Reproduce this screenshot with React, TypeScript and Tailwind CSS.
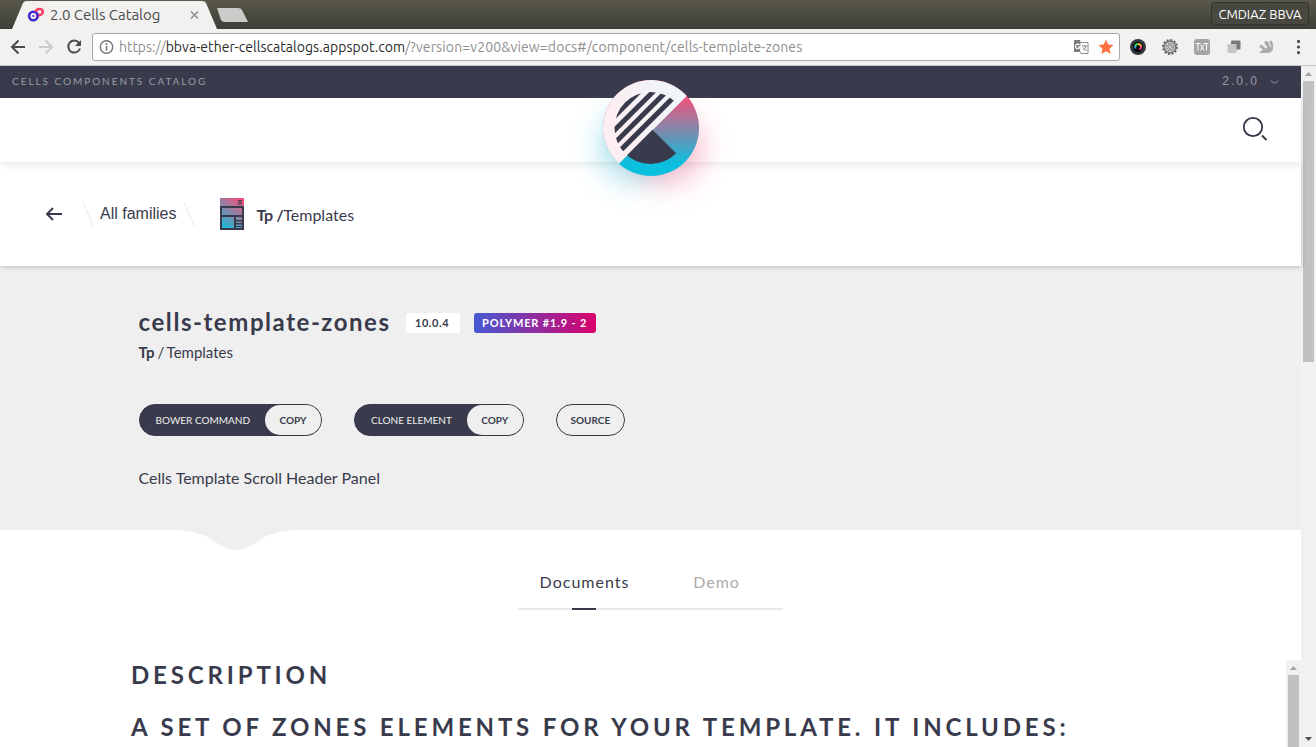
import React from "react";

function TabStrip() {
  return (
    <div className="relative flex h-[29px] shrink-0 bg-gradient-to-b from-[#59584b] to-[#3e3d37] font-['Ubuntu','Open_Sans',sans-serif]">
      <svg className="h-[29px] w-[250px] shrink-0" viewBox="0 0 250 29">
        <path d="M12 29 L23 3 Q24 1 27 1 H202 Q205 1 206 3 L217 29 Z" fill="#f2f1f0" />
        <path d="M217 8 H238 Q241 8 242 10 L248 22 H225 Q222 22 221 20 Z" fill="#cdcbc9" />
        <circle cx="33.300" cy="16" r="4.200" fill="none" stroke="#3d2cd0" strokeWidth="2.600" />
        <circle cx="33.300" cy="16" r="1.100" fill="#3d2cd0" />
        <path d="M35.500 11.500 Q37 8.800 40 9 Q43 9.400 42.800 12 Q42.500 15 38.500 15.300 L37.500 17" fill="none" stroke="#fa3c66" strokeWidth="2.500" />
        <path d="M36.500 12.500 Q38.500 15 37.500 18" fill="none" stroke="#5a2fc4" strokeWidth="2.200" />
        <path d="M191 11.500 l7 7 M198 11.500 l-7 7" stroke="#8d8c8a" strokeWidth="1.500" />
      </svg>
      <div className="absolute left-[50px] top-[5px] whitespace-nowrap text-[15px] leading-5 tracking-[-0.05px] text-[#4c4c4c]">2.0 Cells Catalog</div>
      <div className="ml-auto mr-[7px] mt-[2px] flex h-[23px] w-[98px] items-center justify-center whitespace-nowrap rounded-[4px] border border-[#33322d] bg-[#484740] pt-[2px] text-[13px] text-white">CMDIAZ BBVA</div>
    </div>
  );
}

function Toolbar() {
  return (
    <div className="flex h-[37px] shrink-0 items-center border-b border-[#c9c7c5] bg-[#f2f1f0] font-['Ubuntu','Open_Sans',sans-serif]">
      <svg className="h-[36px] w-[92px] shrink-0" viewBox="0 0 92 36" fill="none" strokeWidth="2">
        <path d="M25 18 H12 M18.500 11.500 L12 18 L18.500 24.500" stroke="#4b4b4b" />
        <path d="M39 18 H52 M45.500 11.500 L52 18 L45.500 24.500" stroke="#cdcccb" />
        <path d="M79 13.800 A6 6 0 1 0 80 19.500" stroke="#4b4b4b" />
        <path d="M81 11 V17 H75 Z" fill="#4b4b4b" />
      </svg>
      <div className="flex h-[28px] w-[1028px] shrink-0 items-center rounded-[3px] border border-[#a9a8a7] bg-white">
        <svg className="ml-[6px] h-4 w-4 shrink-0" viewBox="0 0 16 16">
          <circle cx="7.500" cy="8" r="6.200" fill="none" stroke="#757575" strokeWidth="1.400" />
          <path d="M7.500 7 V11.500 M7.500 4.300 V6" stroke="#757575" strokeWidth="1.600" />
        </svg>
        <div className="ml-[4px] whitespace-nowrap text-[14px] leading-5 text-[#8f8f8f]">
          <span className="tracking-[-0.05px]">https://</span><span className="tracking-[0.05px] text-[#2b2b2b]">bbva-ether-cellscatalogs.appspot.com</span><span className="tracking-[0.12px]">/?version=v200&amp;view=docs#/component/cells-template-zones</span>
        </div>
        <svg className="ml-auto mr-[3px] h-[18px] w-[44px] shrink-0" viewBox="0 0 44 18">
          <path d="M2 2 H8 L11 14 H2 Z" fill="#7b7b7b" />
          <path d="M8.500 4.500 H16 V15.500 H9 L8 13.500" fill="#fff" stroke="#8a8a8a" />
          <path d="M7.600 7 a2.300 2.300 0 1 0 .4 2 H5.800" fill="none" stroke="#fff" strokeWidth="1.100" />
          <path d="M10 8 H15 M12.500 7 V8 M14 8 Q13.500 11 11 12.500 M11 9.500 L14.500 13" fill="none" stroke="#888" />
          <path d="M34 1.500 L36.200 6.600 L41.500 7.100 L37.500 10.700 L38.700 16 L34 13.200 L29.300 16 L30.500 10.700 L26.500 7.100 L31.800 6.600 Z" fill="#ff7043" />
        </svg>
      </div>
      <svg className="h-[36px] w-[196px] shrink-0" viewBox="1120 29 196 36">
        <circle cx="1138" cy="47" r="8" fill="#343942" />
        <circle cx="1138" cy="47" r="5.200" fill="#090909" />
        <g fill="none" strokeWidth="2">
          <path d="M1135.200 46.500 A3 3 0 0 1 1138 44" stroke="#35d95b" />
          <path d="M1138 44 A3 3 0 0 1 1141 47" stroke="#f3b42d" />
          <path d="M1141 46.500 A3 3 0 0 1 1139.500 49.500" stroke="#f02f9a" />
          <path d="M1135.200 46 V48.500" stroke="#2e9ef4" />
        </g>
        <circle cx="1170" cy="47" r="6.800" fill="#999" stroke="#696969" strokeWidth="2.400" strokeDasharray="2 1.560" />
        <circle cx="1170" cy="47" r="5.500" fill="#d2d2d2" stroke="#666" strokeWidth=".9" />
        <circle cx="1170" cy="47" r="3.300" fill="none" stroke="#777" strokeWidth="1.300" strokeDasharray="1.700 .9" />
        <circle cx="1170" cy="47" r="1.500" fill="#eee" stroke="#666" strokeWidth=".7" />
        <rect x="1194" y="39" width="16" height="16" rx="3" fill="#a4a4a4" />
        <path d="M1195.500 43.500 h5 M1198 43.500 v7 M1200.500 44.500 l3.500 6 M1204 44.500 l-3.500 6 M1203.500 43.500 h5 M1206.500 43.500 v7" stroke="#fff" fill="none" />
        <rect x="1231" y="40.500" width="9.500" height="9" rx="1" fill="#777" />
        <rect x="1227.500" y="44" width="9" height="9" rx="1" fill="#c5c5c5" />
        <path d="M1259 47 L1261.500 44.500 L1263.500 46.500 L1266 48.500 Q1268.500 47.500 1265.500 45 Q1263 41 1266.500 41 Q1269 41.500 1269 44.500 L1271.500 47.500 Q1271.500 45.500 1269.500 43 Q1269 40.500 1271.500 40.500 Q1274 44 1273 49 Q1272 53 1268 53 H1259.500 Q1259 51.500 1262 51 L1262.500 49 Z" fill="#ababab" />
        <path d="M1298.500 41.400h.01 M1298.500 47h.01 M1298.500 52.600h.01" stroke="#4b4b4b" strokeWidth="3.200" strokeLinecap="round" />
      </svg>
    </div>
  );
}

function Logo() {
  return (
    <svg className="absolute left-[543px] top-0 h-[160px] w-[216px]" viewBox="-60 -14 216 160">
      <defs>
        <linearGradient id="disc" x1="0" y1="0" x2="0" y2="1">
          <stop offset=".16" stopColor="#f94f78" />
          <stop offset=".87" stopColor="#0bbfde" />
        </linearGradient>
        <linearGradient id="pale" x1="0" y1=".6" x2="1" y2=".2">
          <stop offset=".15" stopColor="#fdeef2" />
          <stop offset=".85" stopColor="#ecf6fa" />
        </linearGradient>
        <clipPath id="outer"><circle cx="48" cy="48" r="48" /></clipPath>
        <clipPath id="inner"><circle cx="47.500" cy="48" r="36" /></clipPath>
        <filter id="soft" x="-60%" y="-60%" width="220%" height="220%"><feGaussianBlur stdDeviation="14" /></filter>
      </defs>
      <g filter="url(#soft)">
        <circle cx="35" cy="66" r="37" fill="#2cbcd4" opacity=".45" />
        <circle cx="64" cy="68" r="36" fill="#f4557f" opacity=".38" />
      </g>
      <path d="M-60 -14 H156 V18 H-60 Z" fill="#393b4c" />
      <circle cx="48" cy="48" r="48" fill="url(#disc)" />
      <g clipPath="url(#outer)"><path d="M0 0 H99.700 L0 99.700 Z" fill="url(#pale)" /></g>
      <g clipPath="url(#inner)" fill="#393b4c">
        <path d="M0 0 H51.300 L0 51.300 Z" />
        <path d="M58.300 0 H65.300 L0 65.300 V58.300 Z" />
        <path d="M71.200 0 H78.300 L0 78.300 V71.200 Z" />
        <path d="M84.300 0 H91.500 L0 91.500 V84.300 Z" />
        <path d="M49.500 49.800 L96 96 H3.300 Z" />
      </g>
    </svg>
  );
}

function TemplateIcon() {
  return (
    <svg className="h-8 w-6 shrink-0" viewBox="0 0 24 32">
      <defs>
        <linearGradient id="tpl" gradientUnits="userSpaceOnUse" x1="3" y1="28" x2="23" y2="2">
          <stop offset="0" stopColor="#1fb9d8" />
          <stop offset="1" stopColor="#f94f78" />
        </linearGradient>
      </defs>
      <path d="M0 0 H24 V32 H0 Z" fill="url(#tpl)" />
      <path fillRule="evenodd" d="M0 8 H24 V32 H0 Z M2 10 V17 H22 V10 Z M2 19 V30 H14 V19 Z M16 19 V22 H22 V19 Z M16 23.500 V25 H22 V23.500 Z M16 26.500 V28 H22 V26.500 Z M16 29 V30 H22 V29 Z" fill="#393b4c" />
      <path d="M18 2.500 H22 M18 4.300 H22 M18 6 H22" stroke="#393b4c" strokeWidth="1" />
    </svg>
  );
}

function Header() {
  return (
    <header className="relative z-10 shrink-0">
      <div className="flex h-8 items-center bg-[#393b4c] pl-3 text-[#999ba5]">
        <span className="-mt-[2px] text-[10px] tracking-[1.96px]">CELLS COMPONENTS CATALOG</span>
        <span className="-mt-[2px] ml-auto font-['Liberation_Sans',sans-serif] text-[12px] tracking-[2px]">2.0.0</span>
        <svg className="ml-[11px] mr-[22px] h-2 w-[9px]" viewBox="0 0 9 8"><path d="M.5 2.500 L3 4.500 Q4.500 5.500 6 4.500 L8.500 2.500" fill="none" stroke="#8f919f" /></svg>
      </div>
      <div className="flex h-16 justify-end bg-white pr-[33px] pt-[17px] shadow-[0_2px_8px_rgba(0,0,0,0.10)]">
        <svg className="h-7 w-7" viewBox="0 0 28 28" fill="none" stroke="#343648">
          <circle cx="13" cy="12" r="9.200" strokeWidth="1.800" />
          <path d="M22 20.500 L26.500 25" strokeWidth="2" />
        </svg>
      </div>
      <Logo />
    </header>
  );
}

function Breadcrumb() {
  return (
    <nav className="relative z-[1] flex h-[104px] shrink-0 items-center bg-white pl-[45px] shadow-[0_1px_5px_rgba(0,0,0,0.22)]">
      <svg className="h-4 w-[18px] shrink-0" viewBox="0 0 18 16"><path d="M17 8 H2 M8 2 L2 8 L8 14" fill="none" stroke="#393b4c" strokeWidth="1.900" /></svg>
      <svg className="ml-[19px] h-6 w-3 shrink-0" viewBox="0 0 12 24"><path d="M1 0 L11 24" stroke="#e9e9ea" /></svg>
      <span className="ml-[6px] whitespace-nowrap font-['Liberation_Sans',sans-serif] text-[16px]">All families</span>
      <svg className="ml-[7px] h-6 w-3 shrink-0" viewBox="0 0 12 24"><path d="M1 0 L11 24" stroke="#e9e9ea" /></svg>
      <div className="ml-[25px] flex items-center">
        <TemplateIcon />
        <span className="ml-[12px] mt-[1px] whitespace-nowrap text-[16px] leading-6"><b className="tracking-[-0.4px]">Tp /</b>Templates</span>
      </div>
    </nav>
  );
}

function CopyPill({ label }: { label: string }) {
  return (
    <div className="flex h-8 items-stretch rounded-full border border-[#393b4c] bg-[#393b4c] text-[10px]">
      <span className="flex items-center whitespace-nowrap pl-4 pr-[15px] text-[#efefef]">{label}</span>
      <span className="flex w-14 items-center justify-center rounded-full bg-[#efefef] font-bold">COPY</span>
    </div>
  );
}

function Hero() {
  return (
    <section className="relative h-[264px] shrink-0 bg-[#efefef] pl-[138.6px] pt-[40px]">
      <div className="flex h-8 items-center">
        <h1 className="w-[251px] whitespace-nowrap text-[24px] font-bold leading-8 tracking-[1.55px]">cells-template-zones</h1>
        <span className="ml-[16px] mt-[2px] flex h-5 w-[54px] items-center justify-center rounded-[3px] bg-white pr-[1px] text-[11px] font-bold tracking-[.6px]">10.0.4</span>
        <span className="ml-[14px] mt-[2px] flex h-5 w-[122px] items-center justify-center whitespace-nowrap rounded-[3px] bg-[linear-gradient(90deg,#465ad4,#d9006c)] text-[11px] font-bold tracking-[.85px] text-white">POLYMER #1.9 - 2</span>
      </div>
      <p className="mt-[4px] text-[15px] leading-5 [word-spacing:-1px]"><b>Tp</b> / Templates</p>
      <div className="mt-[42px] flex gap-8">
        <CopyPill label="BOWER COMMAND" />
        <CopyPill label="CLONE ELEMENT" />
        <span className="flex h-8 w-[69px] items-center justify-center rounded-full border border-[#393b4c] text-[10px] font-bold">SOURCE</span>
      </div>
      <p className="mt-[32px] text-[16px] leading-5">Cells Template Scroll Header Panel</p>
      <svg className="absolute left-[170px] top-[264px] h-5 w-[130px]" viewBox="0 0 130 20"><path d="M0 0 C22 0 34 4 44 11 C53 17 58 20 66 20 C74 20 80 17 88 11 C98 4 110 0 130 0 Z" fill="#efefef" /></svg>
    </section>
  );
}

function Content() {
  return (
    <main className="flex min-h-0 flex-1 flex-col bg-white">
      <div className="mx-auto flex h-20 w-[265px] shrink-0 flex-col justify-end">
        <div className="flex text-[16px] leading-6 tracking-[1px]">
          <span className="w-[132px] pl-[1px] text-center">Documents</span>
          <span className="w-[133px] text-center text-[#a9abae]">Demo</span>
        </div>
        <div className="mt-[14px] h-[2px] bg-[#e9e9e9] pl-[54px]"><div className="h-[2px] w-6 bg-[#393b4c]" /></div>
      </div>
      <div className="mt-[50px] flex min-h-0 flex-1">
        <div className="min-w-0 flex-1 overflow-hidden pl-[131px] font-bold">
          <h2 className="whitespace-nowrap text-[24px] leading-[30px] tracking-[3.84px]">DESCRIPTION</h2>
          <h2 className="mt-[22px] whitespace-nowrap text-[24px] leading-[30px] tracking-[3.84px]">A SET OF ZONES ELEMENTS FOR YOUR TEMPLATE. IT INCLUDES:</h2>
        </div>
        <div className="flex w-[15px] flex-col items-center bg-[#f1f1f1]">
          <svg className="h-[15px] w-[15px] shrink-0" viewBox="0 0 15 15"><path d="M4 10 L7.500 6 L11 10 Z" fill="#a3a3a3" /></svg>
          <div className="w-[11px] flex-1 bg-[#c1c1c1]" />
        </div>
      </div>
    </main>
  );
}

function PageScrollbar() {
  return (
    <div className="flex w-[15px] shrink-0 flex-col items-center bg-[#f1f1f1]">
      <svg className="h-[15px] w-[15px] shrink-0" viewBox="0 0 15 15"><path d="M4 10 L7.500 6 L11 10 Z" fill="#a3a3a3" /></svg>
      <div className="h-[281px] w-[11px] bg-[#c1c1c1]" />
      <svg className="mt-auto h-[15px] w-[15px] shrink-0" viewBox="0 0 15 15"><path d="M4 5 H11 L7.500 9 Z" fill="#505050" /></svg>
    </div>
  );
}

export default function App() {
  return (
    <div className="flex h-[747px] w-[1316px] flex-col overflow-hidden bg-white font-['Lato',sans-serif] text-[#393b4c]">
      <TabStrip />
      <Toolbar />
      <div className="flex min-h-0 flex-1">
        <div className="flex min-w-0 flex-1 flex-col">
          <Header />
          <Breadcrumb />
          <Hero />
          <Content />
        </div>
        <PageScrollbar />
      </div>
    </div>
  );
}
